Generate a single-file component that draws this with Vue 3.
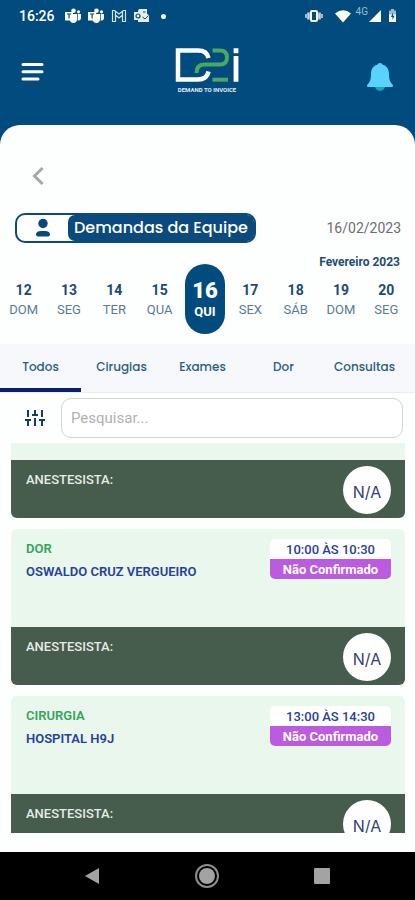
<script setup>
import { ref } from 'vue'

const days = [
  { n: 12, name: 'DOM' },
  { n: 13, name: 'SEG' },
  { n: 14, name: 'TER' },
  { n: 15, name: 'QUA' },
  { n: 16, name: 'QUI' },
  { n: 17, name: 'SEX' },
  { n: 18, name: 'SÁB' },
  { n: 19, name: 'DOM' },
  { n: 20, name: 'SEG' },
]
const selectedDay = ref(16)

const tabs = ['Todos', 'Cirugias', 'Exames', 'Dor', 'Consultas']
const activeTab = ref('Todos')

const search = ref('')

const demands = [
  { id: 1, scrolled: true },
  { id: 2, type: 'DOR', place: 'OSWALDO CRUZ VERGUEIRO', time: '10:00 ÀS 10:30', status: 'Não Confirmado' },
  { id: 3, type: 'CIRURGIA', place: 'HOSPITAL H9J', time: '13:00 ÀS 14:30', status: 'Não Confirmado' },
]
</script>

<template>
  <div class="app">
    <div class="status">
      <span class="clock">16:26</span>
      <svg v-for="i in 2" :key="i" class="note" width="16" height="16" viewBox="0 0 16 16" fill="#fff">
        <circle cx="8.500" cy="2.800" r="2.300" />
        <circle cx="13.500" cy="3.800" r="1.600" />
        <path d="M5 6h7v5.500a3.700 3.700 0 0 1-7 1.500z" />
        <path d="M12.700 6H16v4a2.600 2.600 0 0 1-3.300 2.500z" />
        <path d="M0 4h8v8.500H0z" />
        <path d="M2 6h4.200M4.100 6v4.500" stroke="#024b7e" stroke-width="1.200" />
      </svg>
      <svg class="note" width="16" height="14" viewBox="0 0 16 14" fill="none" stroke="#d3e2ec" stroke-width="1.200">
        <path d="M1.500 12.500v-11h2L8 5l4.500-3.500h2v11h-3V6L8 9 4.500 6v6.500z" />
        <path d="M4.500 1.800V6M11.500 1.800V6" />
      </svg>
      <svg class="note" width="16" height="14" viewBox="0 0 16 14" fill="#e4eef4">
        <path d="M5 0h8v5l2 1v7H4V2z" />
        <path d="M0 3h8v8H0z" />
        <circle cx="4" cy="7" r="2" fill="none" stroke="#024b7e" stroke-width="1.200" />
        <path d="M8.500 8l2.500 2 3.500-3.500M9 3h2.500" fill="none" stroke="#024b7e" />
      </svg>
      <i class="dot"></i>
      <span class="grow"></span>
      <svg width="18" height="14" viewBox="0 0 18 14">
        <path d="M1 5v4M17 5v4" stroke="#c7dae7" stroke-width="1.500" />
        <path d="M3.500 3.500v7M14.500 3.500v7" stroke="#c7dae7" stroke-width="2.500" />
        <rect x="6" y="2" width="6" height="10" rx="1" fill="none" stroke="#fff" stroke-width="2" />
      </svg>
      <svg class="wifi" width="18" height="14" viewBox="0 0 18 14" fill="#fff">
        <path d="M1 4.500Q9-2 17 4.500L9 13.500z" />
      </svg>
      <span class="net">4G</span>
      <svg width="14" height="14" viewBox="0 0 14 14" fill="#fff"><path d="M13 1v12H1z" /></svg>
      <svg class="battery" width="9" height="14" viewBox="0 0 9 14">
        <path d="M3 0h3v1.500h2V6H1V1.500h2z" fill="#9dbbcf" />
        <path d="M1 5.500h7V13H1z" fill="#fff" />
        <path d="M5 3.500L3 8h1.500v3L6.500 6.800H5z" fill="#024b7e" />
      </svg>
    </div>

    <header class="header">
      <button class="icon-btn" aria-label="Menu">
        <svg width="24" height="20" viewBox="0 0 24 20" stroke="#fff" stroke-width="3" stroke-linecap="round">
          <path d="M3 2.500h19M3 9.700h19M3 17h15" />
        </svg>
      </button>
      <div class="logo">
        <svg width="66" height="36" viewBox="0 0 66 36" fill="none">
          <path d="M34.500 11Q33 3.500 24 3.500H4v29h20Q33 32.500 34.500 24.500" stroke="#fff" stroke-width="4.500" />
          <path d="M38.500 3.500H46q7 0 7 7T46 17.500H30q-7.500 0-7.500 8.500" stroke="#4aa860" stroke-width="4" />
          <path d="M38.500 32.700H54" stroke="#4aa860" stroke-width="4" />
          <path d="M62 9v25.700M62 1.300v5" stroke="#fff" stroke-width="4.800" />
        </svg>
        <span class="tagline">DEMAND TO INVOICE</span>
      </div>
      <button class="icon-btn" aria-label="Notificações">
        <svg width="28" height="30" viewBox="0 0 28 30">
          <circle cx="14" cy="24" r="5" fill="#1aa3b5" />
          <path d="M14 1c1.500 0 2.300.8 2.600 1.800C21 4 23 7.500 23 12c0 6 1.500 8.500 3.500 10.500.8 1 .6 2.500-.5 2.500H2c-1.100 0-1.300-1.500-.5-2.500C3.500 20.500 5 18 5 12c0-4.500 2-8 6.400-9.200C11.700 1.800 12.500 1 14 1z" fill="#58d3fb" />
        </svg>
      </button>
    </header>

    <main class="sheet">
      <div class="back-row">
        <button class="icon-btn" aria-label="Voltar">
          <svg width="14" height="20" viewBox="0 0 14 20" fill="none" stroke="#a8a8a8" stroke-width="3">
            <path d="M11.500 2L3.500 10l8 8" />
          </svg>
        </button>
      </div>

      <div class="title-row">
        <div class="badge">
          <span class="badge-icon">
            <svg width="16" height="20" viewBox="0 0 16 20" fill="#0b477a">
              <circle cx="8" cy="5.500" r="4.700" />
              <path d="M1 16.500q0-3.500 5-3.500h4q5 0 5 3.500 0 2-2 2H3q-2 0-2-2z" />
            </svg>
          </span>
          <h1 class="badge-text">Demandas da Equipe</h1>
        </div>
        <span class="date">16/02/2023</span>
      </div>

      <div class="month">Fevereiro 2023</div>
      <div class="days">
        <button
          v-for="d in days"
          :key="d.n"
          class="day"
          :class="{ selected: d.n === selectedDay }"
          @click="selectedDay = d.n"
        >
          <b>{{ d.n }}</b>
          <span>{{ d.name }}</span>
        </button>
      </div>

      <nav class="tabs">
        <button
          v-for="t in tabs"
          :key="t"
          class="tab"
          :class="{ active: t === activeTab }"
          @click="activeTab = t"
        >{{ t }}</button>
      </nav>

      <div class="search-row">
        <button class="icon-btn" aria-label="Filtros">
          <svg width="20" height="18" viewBox="0 0 20 18" stroke="#153c63" stroke-width="2">
            <path d="M3 1v7M0 11h6M3 11v6M10 1v5M7 6h6M10 9v8M17 1v7M14 11h6M17 11v6" />
          </svg>
        </button>
        <input v-model="search" class="search" type="text" placeholder="Pesquisar..." aria-label="Pesquisar" />
      </div>

      <section class="list">
        <article v-for="d in demands" :key="d.id" class="card" :class="{ scrolled: d.scrolled }">
          <div class="card-top">
            <template v-if="!d.scrolled">
              <div class="info">
                <span class="type">{{ d.type }}</span>
                <span class="place">{{ d.place }}</span>
              </div>
              <div class="slot">
                <span class="time">{{ d.time }}</span>
                <span class="state">{{ d.status }}</span>
              </div>
            </template>
          </div>
          <div class="card-foot">
            <span class="role">ANESTESISTA:</span>
            <span class="avatar">N/A</span>
          </div>
        </article>
      </section>
    </main>

    <footer class="sysnav">
      <button class="icon-btn" aria-label="Anterior">
        <svg width="16" height="18" viewBox="0 0 16 18" fill="#a3a3a3"><path d="M15 1v16L1 9z" /></svg>
      </button>
      <button class="icon-btn" aria-label="Início">
        <svg width="26" height="26" viewBox="0 0 26 26" fill="#a3a3a3">
          <circle cx="13" cy="13" r="8" />
          <circle cx="13" cy="13" r="11" fill="none" stroke="#8c8c8c" stroke-width="2" />
        </svg>
      </button>
      <button class="icon-btn" aria-label="Recentes">
        <svg width="16" height="16" viewBox="0 0 16 16" fill="#a3a3a3"><rect width="16" height="16" rx="1" /></svg>
      </button>
    </footer>
  </div>
</template>

<style>
body {
  background: #024b7e;
}
</style>

<style scoped>
.app {
  display: flex;
  flex-direction: column;
  height: 100vh;
  background: #024b7e;
  font-family: Roboto, "Liberation Sans", sans-serif;
}
.app *,
.app *::before {
  box-sizing: border-box;
}
svg {
  display: block;
  flex: none;
}
button {
  margin: 0;
  padding: 0;
  border: 0;
  background: none;
  font: inherit;
  color: inherit;
  cursor: pointer;
}
.status {
  display: flex;
  align-items: center;
  height: 32px;
  padding: 0 18px 0 19px;
  color: #fff;
}
.clock {
  margin-right: 3px;
  font-size: 14px;
  font-weight: 500;
}
.note {
  margin-left: 7px;
}
.dot {
  width: 5px;
  height: 5px;
  margin-left: 11px;
  border-radius: 50%;
  background: #fff;
}
.grow {
  flex: 1;
}
.wifi {
  margin: 0 4px 0 11px;
}
.net {
  align-self: flex-start;
  margin: 6px 0 0;
  font-size: 10px;
  line-height: 12px;
  color: #9dbbcf;
}
.battery {
  margin-left: 6px;
}
.header {
  display: flex;
  align-items: flex-start;
  justify-content: space-between;
  height: 93px;
  padding: 15px 21px 0 20px;
}
.header .icon-btn {
  padding-top: 15px;
}
.logo {
  display: flex;
  flex-direction: column;
  align-items: center;
  padding-left: 4px;
}
.tagline {
  margin-top: 2px;
  font-size: 6px;
  line-height: 9px;
  font-weight: 700;
  color: #e4edf4;
  white-space: nowrap;
}
.sheet {
  display: flex;
  flex: 1;
  flex-direction: column;
  min-height: 0;
  padding-bottom: 19px;
  border-radius: 20px 20px 0 0;
  background: #fdfefe;
}
.back-row {
  padding: 41px 31px 23px;
}
.title-row {
  display: flex;
  align-items: center;
  justify-content: space-between;
  padding: 0 14px 0 15px;
}
.badge {
  display: flex;
  height: 30px;
  border: 2px solid #0b4a7d;
  border-radius: 10px;
  background: #fff;
}
.badge-icon {
  display: flex;
  align-items: center;
  justify-content: center;
  width: 52px;
}
.badge-text {
  margin: 0 0 0 -1px;
  padding: 0 6px;
  border-radius: 7px;
  background: #0b4a7d;
  font-family: Poppins, Inter, sans-serif;
  font-size: 16px;
  line-height: 26px;
  font-weight: 500;
  color: #fff;
  white-space: nowrap;
}
.date {
  font-size: 14px;
  color: #6e6e6e;
}
.month {
  padding: 11px 15px 0 0;
  font-size: 12px;
  line-height: 16px;
  font-weight: 700;
  text-align: right;
  color: #1d4f72;
}
.days {
  display: grid;
  grid-template-columns: repeat(9, 1fr);
  align-items: start;
  justify-items: center;
  height: 74px;
  padding: 0 6px 0 1px;
}
.day {
  display: flex;
  flex-direction: column;
  align-items: center;
  width: 40px;
  padding-top: 10px;
  font-size: 13px;
  line-height: 20px;
  color: #5b7c93;
}
.day b {
  color: #1c4a72;
  font-size: 14px;
}
.day.selected {
  height: 70px;
  margin-top: -6px;
  padding-top: 14px;
  border-radius: 20px;
  background: #024b7e;
  color: #fff;
  font-weight: 700;
}
.day.selected b {
  font-size: 22px;
  line-height: 26px;
  color: #fff;
}
.day.selected span {
  line-height: 15px;
}
.tabs {
  display: grid;
  grid-template-columns: repeat(5, 1fr);
  height: 49px;
  padding-right: 10px;
  border-bottom: 1px solid #e9ebef;
  background: #f6f8fb;
}
.tab {
  padding-top: 2px;
  border-bottom: 4px solid transparent;
  font-family: Poppins, Inter, sans-serif;
  font-size: 12px;
  font-weight: 500;
  color: #2b5f7e;
}
.tab.active {
  border-bottom-color: #0b1f66;
}
.search-row {
  display: flex;
  align-items: center;
  gap: 16px;
  padding: 5px 12px 5px 25px;
}
.search {
  flex: 1;
  min-width: 0;
  height: 40px;
  padding: 0 9px;
  border: 1px solid #d4d4d6;
  border-radius: 10px;
  background: #fff;
  font: 15px Roboto, sans-serif;
  color: #333;
  outline: none;
}
.search::placeholder {
  color: #b1b1b1;
  opacity: 1;
}
.list {
  display: flex;
  flex: 1;
  flex-direction: column;
  gap: 11px;
  min-height: 0;
  padding: 0 10px 0 11px;
  overflow: hidden;
}
.card {
  flex: none;
  overflow: hidden;
  border-radius: 6px;
  background: #e9f7ec;
}
.card.scrolled {
  border-radius: 0 0 6px 6px;
}
.card-top {
  display: flex;
  align-items: flex-start;
  justify-content: space-between;
  height: 98px;
  padding: 10px 14px 0 15px;
}
.scrolled .card-top {
  height: 17px;
  padding: 0;
}
.info {
  display: flex;
  flex-direction: column;
  gap: 3px;
  font-size: 13px;
  line-height: 20px;
  font-weight: 600;
}
.type {
  color: #35a45c;
}
.place {
  color: #27419a;
}
.slot {
  display: flex;
  flex-direction: column;
  width: 121px;
  overflow: hidden;
  border-radius: 5px;
  background: #fff;
  font-size: 13px;
  line-height: 20px;
  text-align: center;
}
.time {
  padding-top: 2px;
  line-height: 18px;
  font-weight: 500;
  color: #27419a;
}
.state {
  padding-top: 2px;
  line-height: 18px;
  font-weight: 700;
  background: #bb5be0;
  color: #fff;
}
.card-foot {
  display: flex;
  align-items: flex-start;
  justify-content: space-between;
  height: 58px;
  padding: 6px 14px 0 15px;
  background: #465c4c;
}
.role {
  padding-top: 4px;
  font-size: 13px;
  line-height: 20px;
  font-weight: 500;
  color: #e6ece7;
}
.avatar {
  display: flex;
  align-items: center;
  justify-content: center;
  width: 48px;
  height: 48px;
  padding-top: 3px;
  border-radius: 50%;
  background: #fff;
  font-family: Inter, sans-serif;
  font-size: 16px;
  line-height: 16px;
  color: #353f78;
}
.sysnav {
  display: flex;
  align-items: center;
  justify-content: space-between;
  height: 48px;
  padding: 0 85px 0 84px;
  background: #000;
}
</style>
